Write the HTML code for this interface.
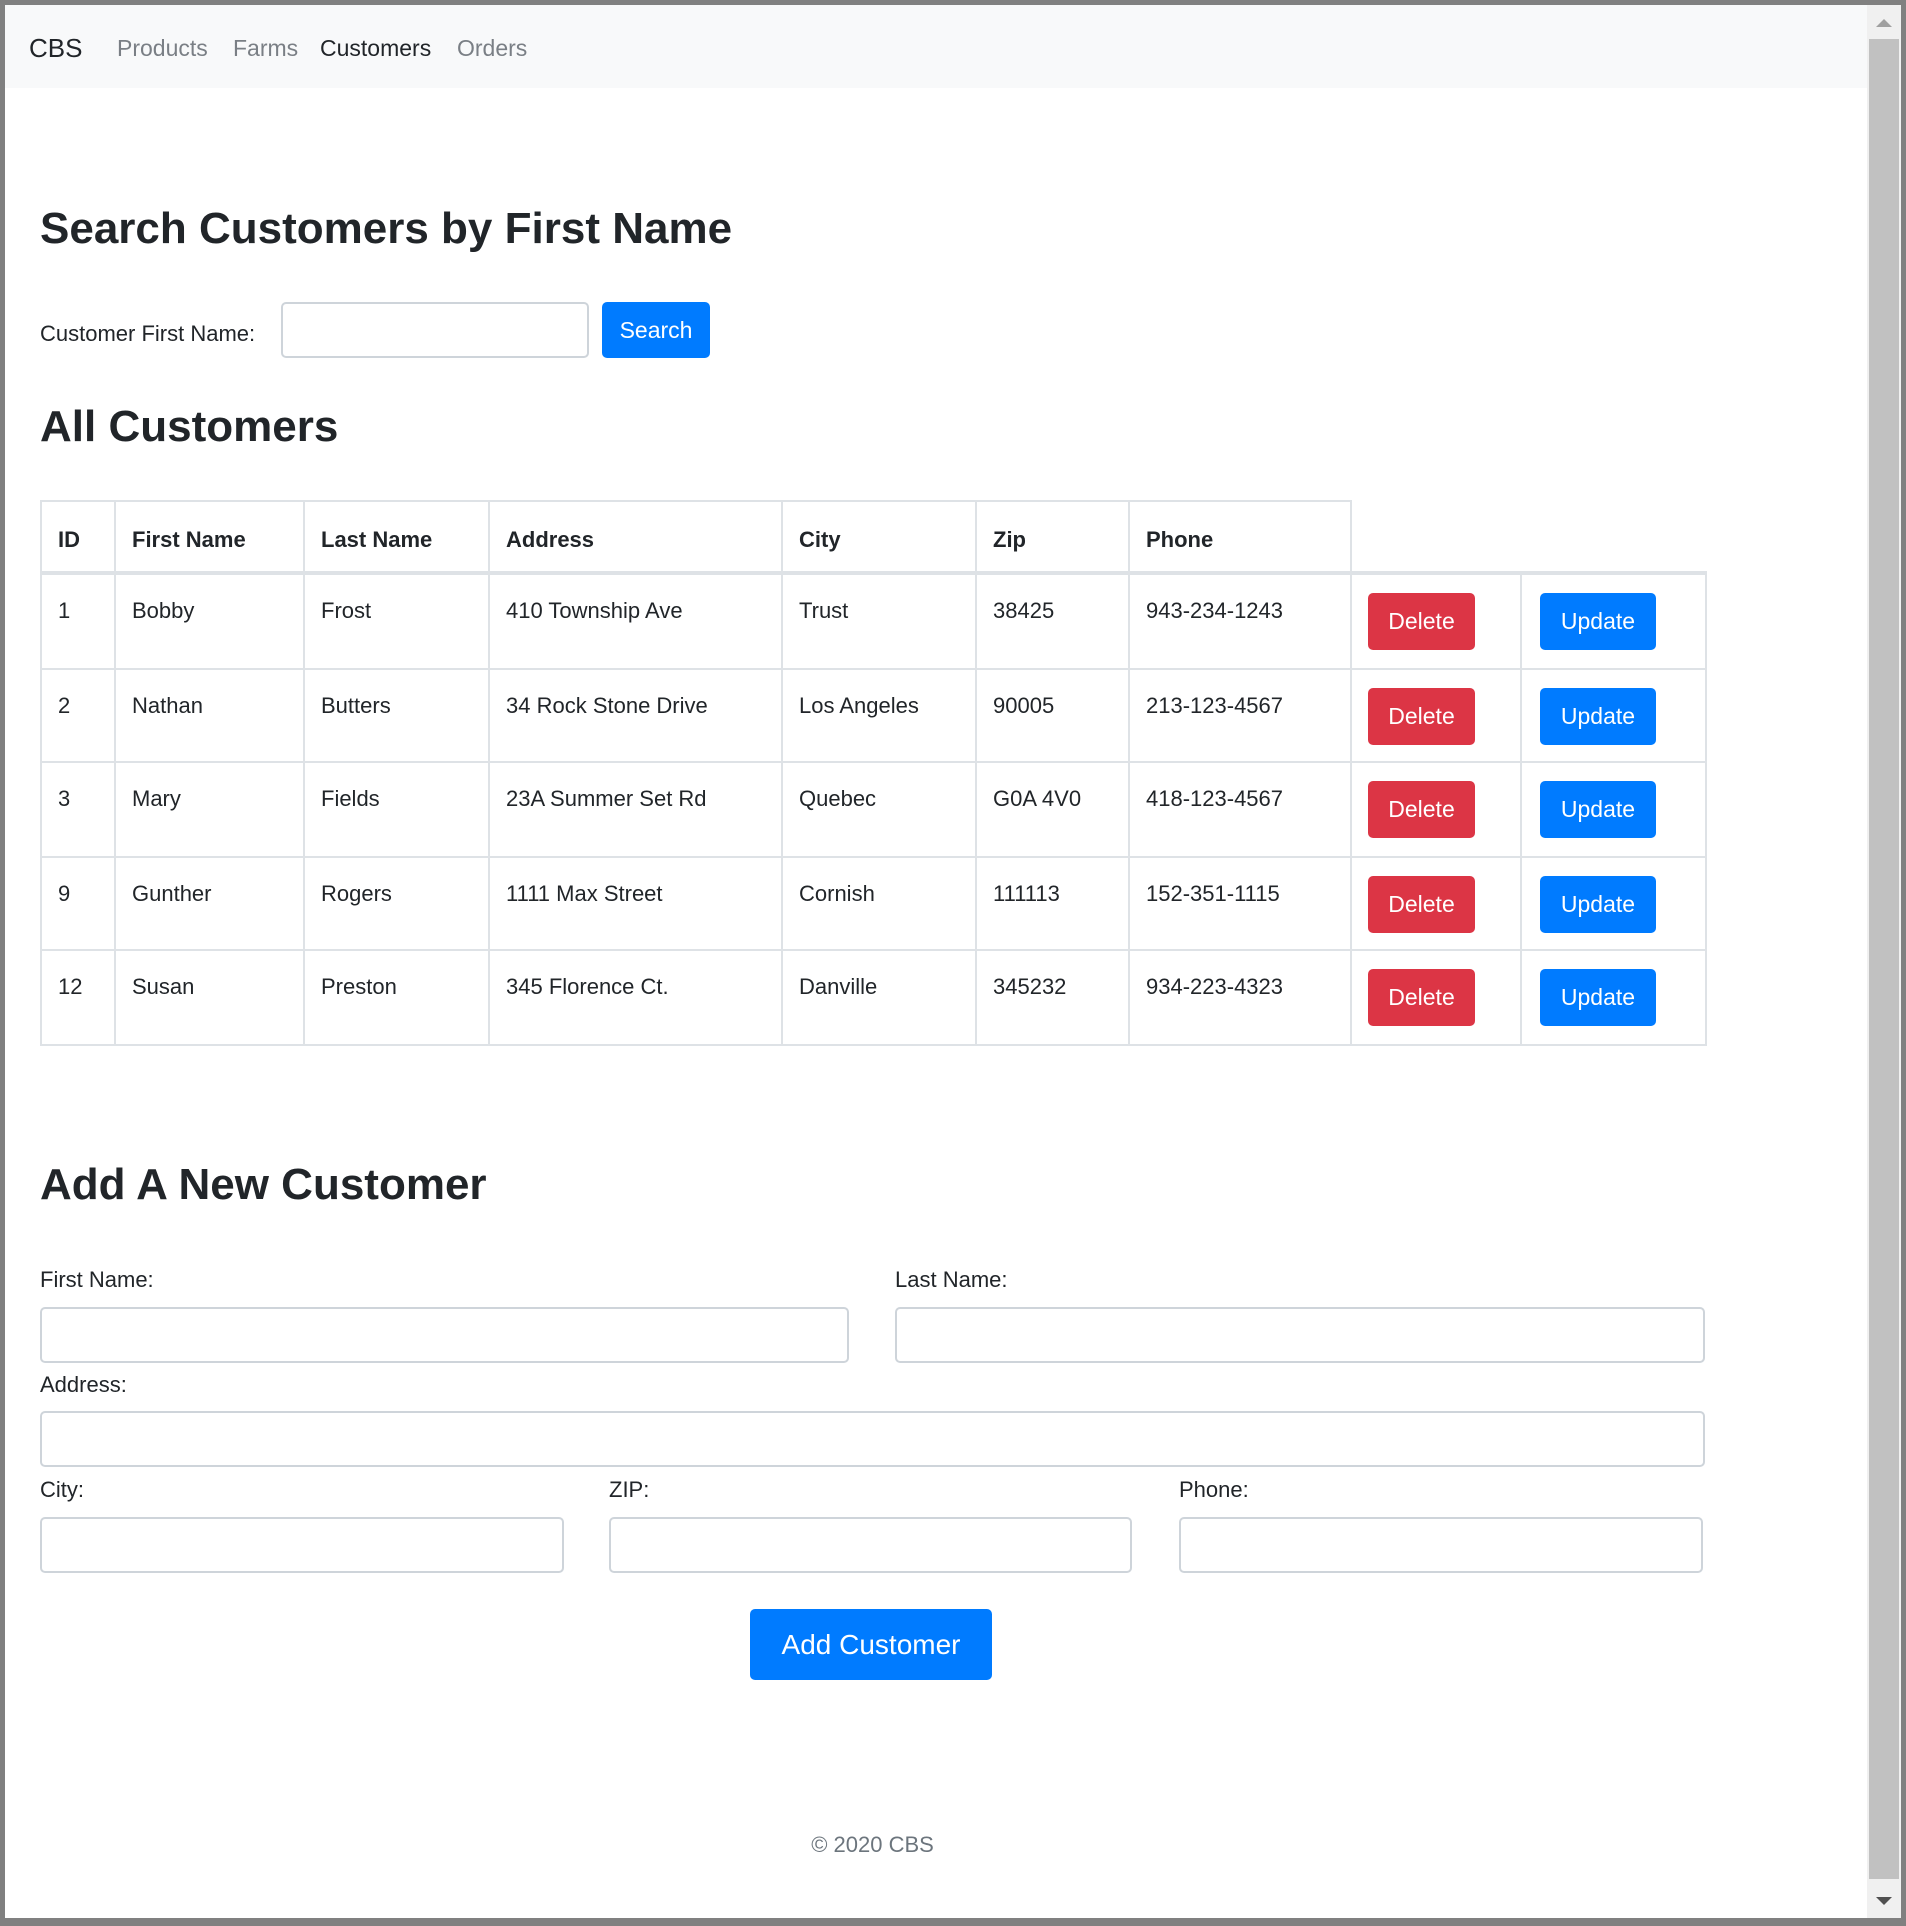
<!DOCTYPE html>
<html><head><meta charset="utf-8"><style>
*{box-sizing:border-box;margin:0;padding:0}
body{width:1906px;height:1926px;background:#808080;position:relative;overflow:hidden;font-family:"Liberation Sans",sans-serif;color:#212529}
#page{position:absolute;left:5px;top:5px;width:1862px;height:1913px;background:#fff;overflow:hidden}
.a{position:absolute;white-space:nowrap}
nav{position:absolute;left:0;top:0;width:1862px;height:83px;background:#f8f9fa}
.nl{font-size:23px;color:#7a7f85;top:30px}
h2{position:absolute;font-weight:bold;font-size:44px;color:#212529;white-space:nowrap}
.lbl{font-size:22px}
.inp{position:absolute;border:2px solid #ced4da;border-radius:5px;background:#fff}
.btn{position:absolute;color:#fff;border-radius:5px;font-size:23px;text-align:center}
.blue{background:#007bff}.red{background:#dc3545}
.hl{position:absolute;background:#dee2e6}
.cell{position:absolute;font-size:22px;white-space:nowrap}
.th{font-weight:bold}
#sb{position:absolute;left:1867px;top:5px;width:34px;height:1913px;background:#f0f0f0}
#thumb{position:absolute;left:2px;top:34px;width:30px;height:1840px;background:#c1c1c1}
</style></head><body>
<div id="page">
<nav>
<div class="a" style="left:24px;top:28px;font-size:26px;color:#212529">CBS</div>
<div class="a nl" style="left:112px">Products</div>
<div class="a nl" style="left:228px">Farms</div>
<div class="a nl" style="left:315px;color:#212529">Customers</div>
<div class="a nl" style="left:452px">Orders</div>
</nav>
<h2 style="left:35px;top:199px">Search Customers by First Name</h2>
<div class="a lbl" style="left:35px;top:316px">Customer First Name:</div>
<div class="inp" style="left:276px;top:297px;width:308px;height:56px"></div>
<div class="btn blue" style="left:597px;top:297px;width:108px;height:56px;line-height:56px">Search</div>
<h2 style="left:35px;top:397px">All Customers</h2>

<div id="tbl"></div>

<h2 style="left:35px;top:1155px">Add A New Customer</h2>
<div class="a lbl" style="left:35px;top:1262px">First Name:</div>
<div class="a lbl" style="left:890px;top:1262px">Last Name:</div>
<div class="inp" style="left:35px;top:1302px;width:809px;height:56px"></div>
<div class="inp" style="left:890px;top:1302px;width:810px;height:56px"></div>
<div class="a lbl" style="left:35px;top:1367px">Address:</div>
<div class="inp" style="left:35px;top:1406px;width:1665px;height:56px"></div>
<div class="a lbl" style="left:35px;top:1472px">City:</div>
<div class="a lbl" style="left:604px;top:1472px">ZIP:</div>
<div class="a lbl" style="left:1174px;top:1472px">Phone:</div>
<div class="inp" style="left:35px;top:1512px;width:524px;height:56px"></div>
<div class="inp" style="left:604px;top:1512px;width:523px;height:56px"></div>
<div class="inp" style="left:1174px;top:1512px;width:524px;height:56px"></div>
<div class="btn blue" style="left:745px;top:1604px;width:242px;height:71px;line-height:71px;font-size:28px">Add Customer</div>
<div class="a" style="left:0;width:1735px;text-align:center;top:1827px;font-size:22px;color:#6c757d">© 2020 CBS</div>
</div>
<div id="sb"><div style="position:absolute;left:9px;top:14px;width:0;height:0;border-left:8px solid transparent;border-right:8px solid transparent;border-bottom:8px solid #a0a0a0"></div><div id="thumb"></div><div style="position:absolute;left:9px;top:1892px;width:0;height:0;border-left:8px solid transparent;border-right:8px solid transparent;border-top:8px solid #505050"></div></div>
<script>
(function(){
var t=document.getElementById('tbl'),h='';
var X=[35,109,298,483,776,970,1123,1345,1515,1700];
var Y=[495,568,663,756,851,944,1039];
h+='<div class="hl" style="left:35px;top:495px;width:1310px;height:2px"></div>';
h+='<div class="hl" style="left:35px;top:566px;width:1667px;height:4px"></div>';
for(var r=2;r<Y.length;r++)h+='<div class="hl" style="left:35px;top:'+Y[r]+'px;width:1667px;height:2px"></div>';
for(var c=0;c<X.length;c++){var tp=c<8?495:568;h+='<div class="hl" style="left:'+X[c]+'px;top:'+tp+'px;width:2px;height:'+(1041-tp)+'px"></div>';}
var hd=['ID','First Name','Last Name','Address','City','Zip','Phone'];
for(c=0;c<7;c++)h+='<div class="cell th" style="left:'+(X[c]+18)+'px;top:522px">'+hd[c]+'</div>';
var d=[['1','Bobby','Frost','410 Township Ave','Trust','38425','943-234-1243'],['2','Nathan','Butters','34 Rock Stone Drive','Los Angeles','90005','213-123-4567'],['3','Mary','Fields','23A Summer Set Rd','Quebec','G0A 4V0','418-123-4567'],['9','Gunther','Rogers','1111 Max Street','Cornish','111113','152-351-1115'],['12','Susan','Preston','345 Florence Ct.','Danville','345232','934-223-4323']];
for(r=0;r<5;r++){var y=Y[r+1];for(c=0;c<7;c++)h+='<div class="cell" style="left:'+(X[c]+18)+'px;top:'+(y+25)+'px">'+d[r][c]+'</div>';
h+='<div class="btn red" style="left:1363px;top:'+(y+20)+'px;width:107px;height:57px;line-height:57px">Delete</div>';
h+='<div class="btn blue" style="left:1535px;top:'+(y+20)+'px;width:116px;height:57px;line-height:57px">Update</div>';}
t.innerHTML=h;
})();
</script>
</body></html>
